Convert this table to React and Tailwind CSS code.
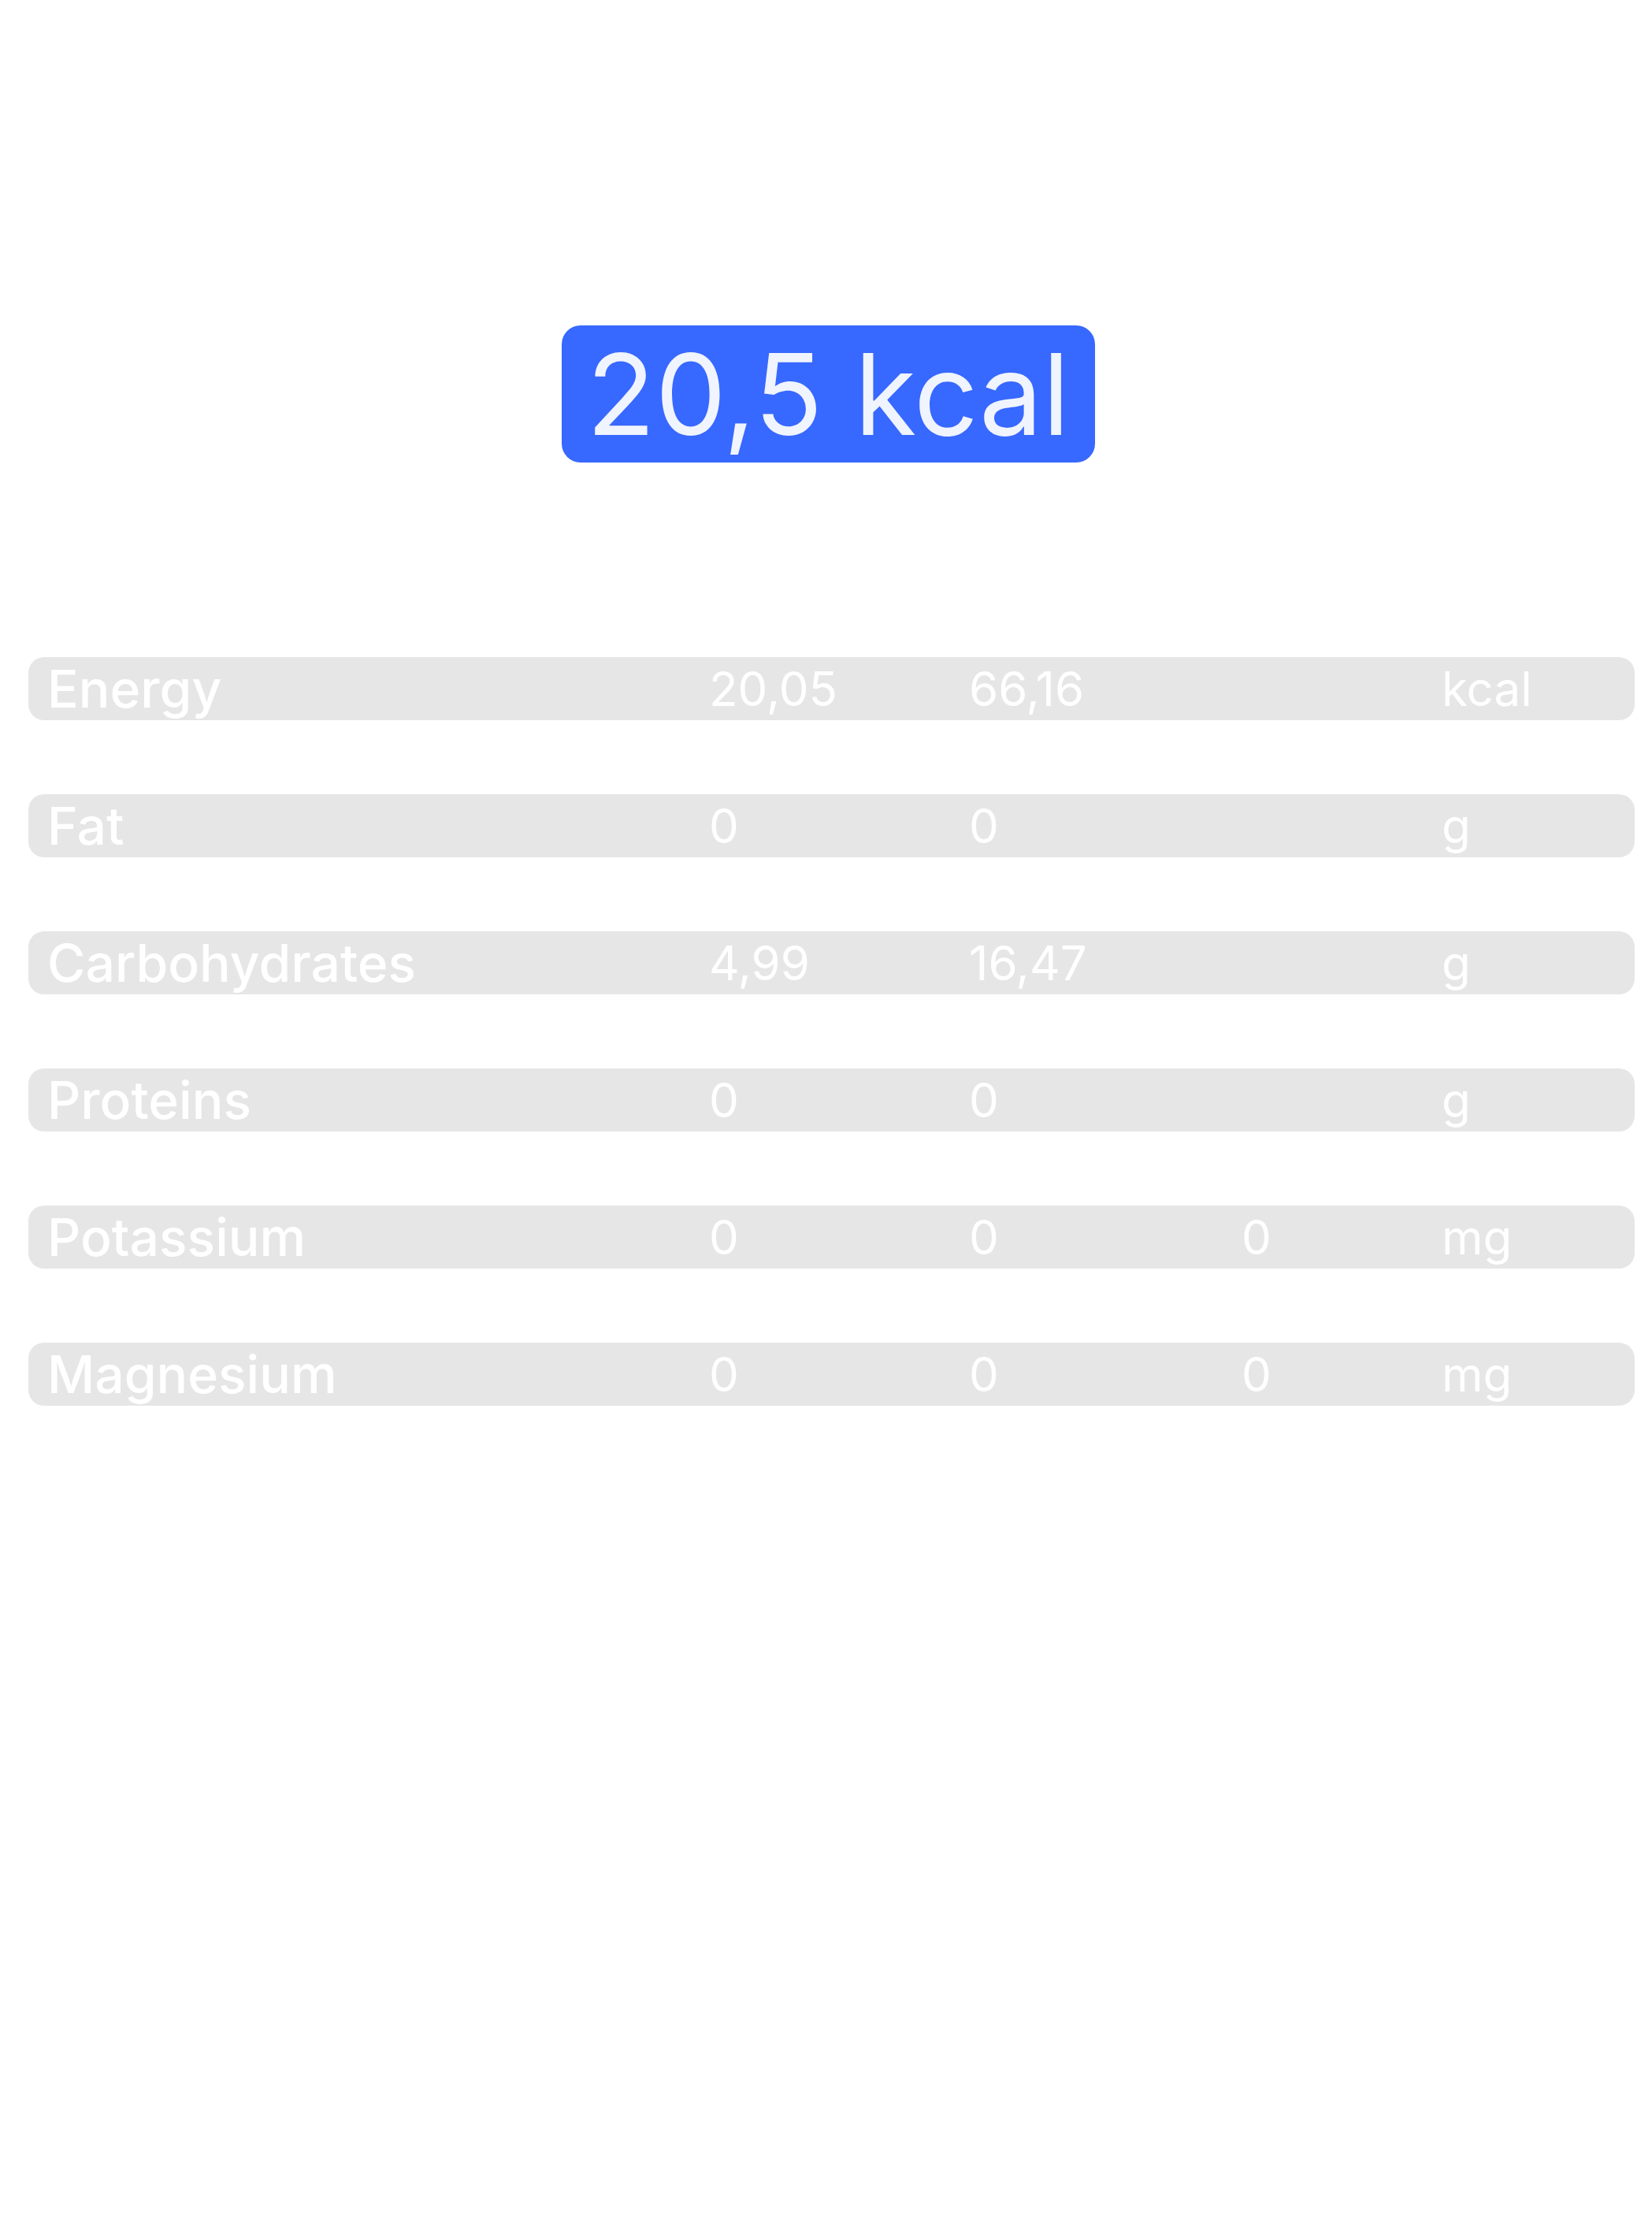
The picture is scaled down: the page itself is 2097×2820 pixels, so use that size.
const rows = [
  { label: "Energy", a: "20,05", b: "66,16", c: "", unit: "kcal" },
  { label: "", a: "83,9", b: "276,87", c: "", unit: "kJ" },
  { label: "Fat", a: "0", b: "0", c: "", unit: "g" },
  { label: "Saturated fatty acids", a: "0", b: "0", c: "", unit: "g" },
  { label: "Carbohydrates", a: "4,99", b: "16,47", c: "", unit: "g" },
  { label: "Sugar", a: "4,99", b: "16,47", c: "", unit: "g" },
  { label: "Proteins", a: "0", b: "0", c: "", unit: "g" },
  { label: "Sodium", a: "0", b: "0", c: "0", unit: "mg" },
  { label: "Potassium", a: "0", b: "0", c: "0", unit: "mg" },
  { label: "Zinc", a: "0", b: "0", c: "0", unit: "mg" },
  { label: "Magnesium", a: "0", b: "0", c: "0", unit: "mg" },
];

const NutritionRow = ({ row, shaded }) => {
  return (
    <div
      className={`grid h-[80px] grid-cols-[840px_330px_346px_254px_1fr] items-center rounded-[20px] pl-[24px] ${
        shaded ? "bg-[#e6e6e6]" : ""
      }`}
    >
      <div className="text-[66px] font-medium leading-[80px]">{row.label}</div>
      <div className="text-[60px] leading-[72px]">{row.a}</div>
      <div className="text-[60px] leading-[72px]">{row.b}</div>
      <div className="text-[60px] leading-[72px]">{row.c}</div>
      <div className="text-[60px] leading-[72px]">{row.unit}</div>
    </div>
  );
};

export default function App() {
  return (
    <div className="min-h-[2820px] bg-white pt-[143px] font-['Inter',sans-serif] text-white">
      <h1 className="pl-[88px] text-[144px] font-semibold leading-[174px]">Tonik Cola</h1>

      <div className="mt-[96px] flex items-center pl-[92px]">
        <span className="text-[144px] leading-[174px]">Calories</span>
        <span className="ml-[62px] rounded-[24px] bg-[#3768ff] px-[32px] text-[143px] leading-[174px] text-[#f0f4ff]">
          20,5 kcal
        </span>
      </div>

      <div className="mt-[95px] flex flex-col gap-[7px] pl-9 pr-[22px]">
        <div className="grid grid-cols-[840px_330px_346px_254px_1fr] pl-[24px] text-[60px] leading-[72.6px]">
          <div></div>
          <div>100ml</div>
          <div>330ml</div>
          <div>330ml %NRV</div>
          <div></div>
        </div>
        {rows.map((row, i) => (
          <NutritionRow key={i} row={row} shaded={i % 2 === 0} />
        ))}
      </div>

      <div className="px-[64px] pt-[150px]">
        <h2 className="text-[68px] font-semibold leading-[82px]">
          SX Cola - the wet taste of fun, a sour touch of excitement
        </h2>
        <p className="mt-[151px] text-justify text-[54px] font-bold uppercase leading-[67px]">
          Low-calorie cola-flavored mineral drink. Does not contain preservatives. Pasteurized.
        </p>
        <p className="mt-[46px] text-justify text-[54px] leading-[66px]">
          Ingredients: water, sugar, carbon dioxide, acidity regulator citric acid, natural lemon and
          flavoring agents, potassium, zinc, magnesium. Best before – see bottom of the can. Store at a
          temperature of +2 to +25°C
        </p>
      </div>
    </div>
  );
}
